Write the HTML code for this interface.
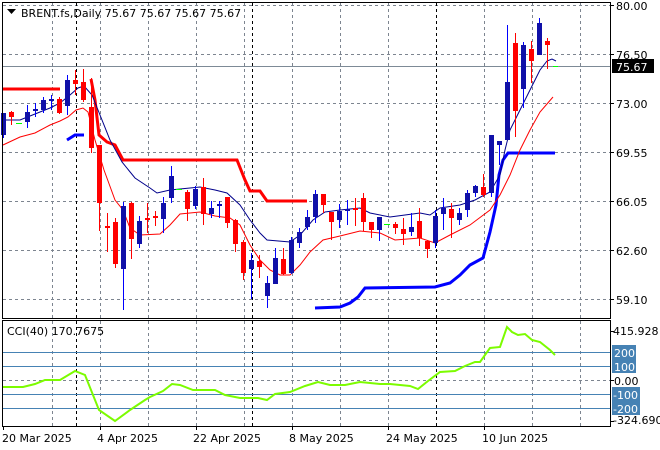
<!DOCTYPE html>
<html><head><meta charset="utf-8"><style>
html,body{margin:0;padding:0;background:#fff;width:660px;height:450px;overflow:hidden}
svg{display:block}
text{font-family:"DejaVu Sans","Liberation Sans",sans-serif;font-size:11px;fill:#000}
</style></head><body>
<svg width="660" height="450" viewBox="0 0 660 450" xmlns="http://www.w3.org/2000/svg">
<rect width="660" height="450" fill="#fff"/>
<!-- grid main -->
<g stroke="#7d8590" stroke-width="1" stroke-dasharray="3,3" fill="none">
<path d="M3 5.5H610M3 54.5H610M3 103.5H610M3 152.5H610M3 201.5H610M3 250.5H610M3 299.5H610"/>
<path d="M52.5 3V318M100.5 3V318M148.5 3V318M196.5 3V318M244.5 3V318M292.5 3V318M340.5 3V318M388.5 3V318M484.5 3V318M532.5 3V318M580.5 3V318"/>
<path d="M52.5 321V426M100.5 321V426M148.5 321V426M196.5 321V426M244.5 321V426M292.5 321V426M340.5 321V426M388.5 321V426M484.5 321V426M532.5 321V426M580.5 321V426"/>
<path d="M3 380.5H610"/>
</g>
<g stroke="#000" stroke-width="1" stroke-dasharray="3,3">
<path d="M76.5 3V318M252.5 3V318M436.5 3V318M76.5 321V426M252.5 321V426M436.5 321V426"/>
</g>
<!-- price line -->
<path d="M3 66.5H610" stroke="#7d8a96" stroke-width="1"/>
<!-- CCI levels -->
<g stroke="#4682b4" stroke-width="1"><path d="M3 352.5H610M3 366.5H610M3 394.5H610M3 408.5H610"/></g>

<!-- red thick -->
<polyline fill="none" stroke="#ff0000" stroke-width="3" points="3,89 60,89"/>
<polyline fill="none" stroke="#ff0000" stroke-width="3" points="91,79 95,100 99,135 107,142 115,145 123,160 237,160 245,180 250,191 260,191 267,201 307,201"/>
<!-- blue thick -->
<polyline fill="none" stroke="#0000ff" stroke-width="3" points="67,140 75,135 84,135"/>
<polyline fill="none" stroke="#0000ff" stroke-width="3" points="315,308 340,307 350,303 358,297 365,288 435,287 450,283 460,275 470,265 483,258 490,232 496,205 499,175 503,160 508,153 555,153"/>
<!-- red MA -->
<polyline fill="none" stroke="#ff0000" stroke-width="1" points="3,145 20,137 35,133 50,125 60,121 68,117 76,110 83,108 88,112 95,140 104,170 115,200 123,210 130,228 140,235 160,234 170,225 180,214 200,212 215,216 230,218 240,225 250,245 260,260 270,270 280,275 290,275 300,265 310,252 323,240 340,236 360,231 380,233 395,240 420,238 435,243 450,235 470,225 490,210 500,195 510,175 520,150 530,130 540,112 553,97"/>
<!-- navy MA -->
<polyline fill="none" stroke="#00008b" stroke-width="1" points="3,120 20,120 35,114 50,108 60,103 70,95 78,88 84,86 92,95 100,115 110,140 122,162 135,178 150,188 157,193 170,190 200,187 215,190 227,193 240,205 250,220 260,233 267,240 290,242 300,235 313,220 325,212 340,210 360,208 370,213 390,217 405,215 420,213 430,215 440,208 460,205 475,200 490,192 500,175 505,150 510,130 520,110 530,90 540,70 547,61 552,59 556,61"/>

<!-- candles -->
<g id="c"></g>
<g stroke-width="1">
<!-- x,bt,bb,wt,wb -->
<path stroke="#0000ff" d="M3.5 113V138M27.5 105V128M35.5 103V117M43.5 97V113M51.5 95V110M67.5 75V115M123.5 202V310M139.5 216V248M163.5 197V233M171.5 166V203M195.5 186V209M211.5 201V218M219.5 201V218M251.5 253V299M267.5 276V308M275.5 248V284M291.5 237V274M299.5 228V248M307.5 210V230M315.5 190V223M339.5 204V228M347.5 200V225M379.5 217V241M411.5 213V236M435.5 210V248M443.5 198V230M459.5 208V225M467.5 190V217M475.5 185V197M491.5 135V197M499.5 141V165M507.5 25V140M523.5 42V108M539.5 18V55"/>
<path stroke="#ff0000" d="M11.5 111V125M59.5 97V114M75.5 70V95M83.5 69V102M91.5 78V153M99.5 145V231M107.5 213V252M115.5 218V268M131.5 202V259M147.5 203V233M155.5 211V226M187.5 190V221M203.5 178V225M227.5 197V228M235.5 219V252M243.5 240V280M259.5 255V278M283.5 248V275M323.5 194V213M331.5 212V240M355.5 198V226M363.5 193V231M371.5 222V238M395.5 222V234M403.5 218V245M419.5 208V246M427.5 240V258M451.5 203V238M483.5 174V197M515.5 33V137M531.5 41V83M547.5 38V69"/>
</g>
<g fill="#1010a8">
<rect x="1" y="113" width="5" height="22"/><rect x="25" y="112" width="5" height="10"/><rect x="33" y="109" width="5" height="2"/><rect x="41" y="100" width="5" height="10"/><rect x="49" y="99" width="5" height="2"/><rect x="65" y="80" width="5" height="26"/><rect x="121" y="206" width="5" height="63"/><rect x="137" y="221" width="5" height="23"/><rect x="161" y="203" width="5" height="16"/><rect x="169" y="176" width="5" height="22"/><rect x="193" y="189" width="5" height="17"/><rect x="209" y="208" width="5" height="6"/><rect x="217" y="204" width="5" height="2"/><rect x="249" y="260" width="5" height="9"/><rect x="265" y="283" width="5" height="13"/><rect x="273" y="258" width="5" height="26"/><rect x="289" y="240" width="5" height="33"/><rect x="297" y="232" width="5" height="11"/><rect x="305" y="217" width="5" height="10"/><rect x="313" y="194" width="5" height="23"/><rect x="337" y="211" width="5" height="9"/><rect x="345" y="209" width="5" height="2"/><rect x="377" y="217" width="5" height="13"/><rect x="409" y="227" width="5" height="5"/><rect x="433" y="216" width="5" height="27"/><rect x="441" y="208" width="5" height="6"/><rect x="457" y="213" width="5" height="7"/><rect x="465" y="193" width="5" height="17"/><rect x="473" y="186" width="5" height="7"/><rect x="489" y="135" width="5" height="58"/><rect x="497" y="141" width="5" height="4"/><rect x="505" y="82" width="5" height="58"/><rect x="521" y="45" width="5" height="44"/><rect x="537" y="23" width="5" height="32"/>
</g>
<g fill="#ff0000">
<rect x="9" y="112" width="5" height="5"/><rect x="57" y="99" width="5" height="14"/><rect x="73" y="80" width="5" height="4"/><rect x="81" y="82" width="5" height="18"/><rect x="89" y="107" width="5" height="41"/><rect x="97" y="145" width="5" height="58"/><rect x="105" y="226" width="5" height="2"/><rect x="113" y="222" width="5" height="42"/><rect x="129" y="203" width="5" height="36"/><rect x="145" y="218" width="5" height="2"/><rect x="153" y="216" width="5" height="2"/><rect x="185" y="192" width="5" height="17"/><rect x="201" y="187" width="5" height="27"/><rect x="225" y="197" width="5" height="26"/><rect x="233" y="220" width="5" height="24"/><rect x="241" y="242" width="5" height="31"/><rect x="257" y="261" width="5" height="6"/><rect x="281" y="259" width="5" height="15"/><rect x="321" y="194" width="5" height="11"/><rect x="329" y="212" width="5" height="10"/><rect x="353" y="208" width="5" height="2"/><rect x="361" y="198" width="5" height="24"/><rect x="369" y="222" width="5" height="8"/><rect x="393" y="224" width="5" height="4"/><rect x="401" y="229" width="5" height="5"/><rect x="417" y="221" width="5" height="17"/><rect x="425" y="241" width="5" height="8"/><rect x="449" y="209" width="5" height="9"/><rect x="481" y="187" width="5" height="8"/><rect x="513" y="43" width="5" height="68"/><rect x="529" y="49" width="5" height="12"/><rect x="545" y="41" width="5" height="4"/>
</g>
<g stroke="#00ff00" stroke-width="1"><path d="M16 123.5H22M176 189.5H182M384 224.5H390M553 66.5H558"/></g>

<!-- CCI -->
<polyline fill="none" stroke="#7cfc00" stroke-width="2" points="3,387 23,387 35,384 45,380 60,380 75,371 85,375 99,410 115,421 130,410 145,400 150,397 163,391 172,384 180,385 193,390 200,390 215,390 225,395 240,398 258,398 267,400 275,394 290,392 305,386 318,382 330,385 345,385 360,382 380,384 390,384 400,385 410,386 418,389 428,381 440,372 455,371 465,366 475,362 480,362 490,348 500,347 507,327 512,332 518,335 525,334 532,340 540,342 550,350 555,355"/>

<!-- frames -->
<g fill="none" stroke="#000" stroke-width="1">
<path d="M2.5 2.5H610.5V318.5H2.5Z"/>
<path d="M2.5 320.5H610.5V426.5H2.5Z"/>
</g>
<g stroke="#000"><path d="M610 5.5h4M610 54.5h4M610 103.5h4M610 152.5h4M610 201.5h4M610 250.5h4M610 299.5h4M610 331.5h4M610 380.5h4M610 421.5h4M3.5 426v4M100.5 426v4M196.5 426v4M292.5 426v4M388.5 426v4M484.5 426v4"/></g>

<!-- axis labels -->
<text x="616" y="10">80.00</text>
<text x="616" y="59">76.50</text>
<text x="616" y="108">73.00</text>
<text x="616" y="157">69.55</text>
<text x="616" y="206">66.05</text>
<text x="616" y="255">62.60</text>
<text x="616" y="304">59.10</text>
<rect x="612" y="59" width="42" height="14" fill="#000"/>
<text x="616" y="71" style="fill:#fff">75.67</text>
<text x="613" y="335">415.928</text>
<rect x="612" y="345" width="24" height="28" fill="#4682b4"/>
<text x="614" y="357" style="fill:#fff">200</text>
<text x="614" y="371" style="fill:#fff">100</text>
<text x="614" y="385">0.00</text>
<rect x="612" y="387" width="28" height="28" fill="#4682b4"/>
<text x="613" y="399" style="fill:#fff">-100</text>
<text x="613" y="413" style="fill:#fff">-200</text>
<text x="613" y="424">-324.690</text>

<text x="2" y="442">20 Mar 2025</text>
<text x="97" y="442">4 Apr 2025</text>
<text x="193" y="442">22 Apr 2025</text>
<text x="289" y="442">8 May 2025</text>
<text x="386" y="442">24 May 2025</text>
<text x="482" y="442">10 Jun 2025</text>

<path d="M7 9h9l-4.5 5z" fill="#000"/>
<text x="21" y="17">BRENT.fs,Daily  75.67 75.67 75.67 75.67</text>
<text x="7" y="335">CCI(40) 170.7675</text>
</svg>
</body></html>
